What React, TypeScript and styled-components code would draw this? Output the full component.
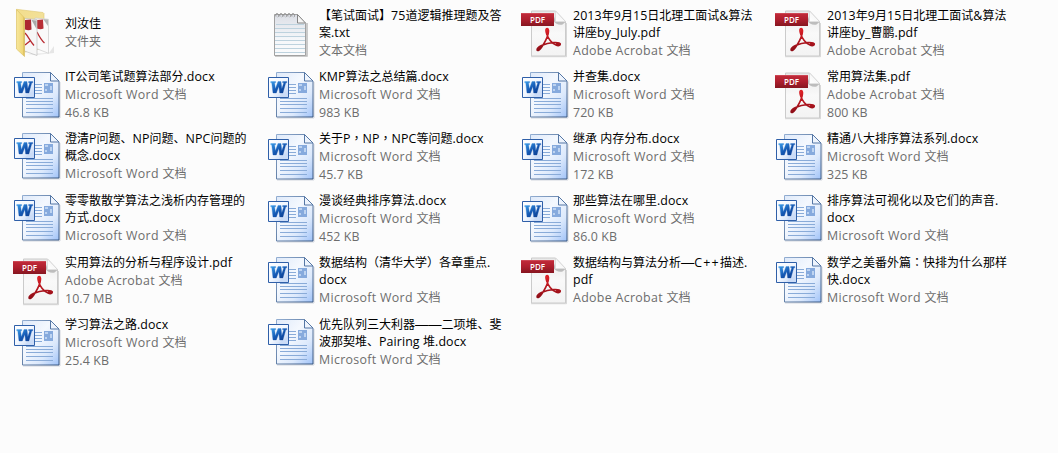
import React from "react";
import styled, { createGlobalStyle } from "styled-components";

const GlobalStyle = createGlobalStyle`
  body {
    margin: 0;
    background: #fcfcfc;
    overflow: hidden;
  }
`;

const FileGrid = styled.main`
  display: grid;
  grid-template-columns: repeat(4, 254px);
  grid-template-rows: 61px repeat(5, 62px);
  padding: 3px 0 0 13px;
  box-sizing: border-box;
  width: 1058px;
  height: 453px;
  overflow: hidden;
  background: #fcfcfc;
  font-family: "Noto Sans CJK SC", sans-serif;
  font-size: 12px;
  color: #000;
`;

const FileTile = styled.article`
  display: flex;
  align-items: flex-start;
  gap: 4px;
`;

const IconSlot = styled.div<{ $raised: boolean }>`
  flex: none;
  width: 48px;
  height: 58px;
  margin-top: ${(p) => (p.$raised ? "-1px" : "0")};
  svg {
    display: block;
  }
`;

const Details = styled.div<{ $short: boolean }>`
  padding-top: ${(p) => (p.$short ? "11px" : "3px")};
  white-space: pre;
`;

const NameLine = styled.div`
  height: 17px;
  line-height: 17px;
`;

const MetaLine = styled.div`
  height: 18px;
  line-height: 19px;
  color: #6d6d6d;
`;

const Latin = styled.span<{ $spacing: number }>`
  font-family: "Open Sans", "Noto Sans", sans-serif;
  font-size: 12.4px;
  letter-spacing: ${(p) => p.$spacing}px;
`;

const CenteredMark = styled.span`
  font-family: "Noto Sans CJK TC", sans-serif;
`;

const Dash = styled.span`
  font-family: "Liberation Sans", sans-serif;
  font-size: 13.3px;
`;

const MixedText = ({ text, spacing = 0.1 }: { text: string; spacing?: number }) => (
  <>
    {text.split(/([\x20-\x7e]+|—+|[，：（）])/).map((run, i) => {
      if (i % 2 === 0) return run;
      if (run.startsWith("—")) return <Dash key={i}>{run}</Dash>;
      if (/[，：（）]/.test(run)) return <CenteredMark key={i} lang="zh-TW">{run}</CenteredMark>;
      return (
        <Latin key={i} $spacing={run.includes("+") ? 1.2 : spacing}>
          {run}
        </Latin>
      );
    })}
  </>
);

const WordIcon = () => (
  <svg width="48" height="58" viewBox="0 0 48 58">
    <defs>
      <linearGradient id="wPage" x1="0" y1="0" x2="1" y2="1">
        <stop offset="0" stopColor="#dfeafa" />
        <stop offset=".4" stopColor="#f4f8fe" />
        <stop offset=".7" stopColor="#dce9fc" />
        <stop offset="1" stopColor="#9fc2f8" />
      </linearGradient>
      <linearGradient id="wEdge" x1="0" y1="0" x2="1" y2="1">
        <stop offset="0" stopColor="#93aed2" />
        <stop offset="1" stopColor="#35547f" />
      </linearGradient>
      <linearGradient id="wBadge" x1="0" y1="0" x2="1" y2="1">
        <stop offset="0" stopColor="#fff" />
        <stop offset=".5" stopColor="#f2f7ff" />
        <stop offset="1" stopColor="#b5cdf3" />
      </linearGradient>
      <linearGradient id="wLetter" x1="0" y1="0" x2="1" y2="1">
        <stop offset="0" stopColor="#3a9ce8" />
        <stop offset=".5" stopColor="#1559b4" />
        <stop offset="1" stopColor="#0b3a8c" />
      </linearGradient>
    </defs>
    <path d="M10 54h37V18" fill="none" stroke="#b9c0cb" strokeOpacity=".6" />
    <path d="M9.500 8.500h28l8.500 8.500v36H9.500z" fill="url(#wPage)" stroke="url(#wEdge)" />
    <path d="M37.500 8.500v8.500H46z" fill="#eef4fd" stroke="#5577a5" />
    <path d="M22 20.500h7M22 23.500h7M22 26.500h7M22 29.500h7M13 34.500h27M13 37.500h27M13 40.500h27M13 44.500h27M13 48.500h27" stroke="#89abd8" />
    <path d="M31 19h9v10h-9z" fill="#86aadd" />
    <path d="M32 20h3v2h-3zM37 22h2v4h-2zM32 25h2v2h-2z" fill="#bed4f1" />
    <path d="M1.500 13.500h20v20h-20z" fill="url(#wBadge)" stroke="#2f5fa8" />
    <path d="M12 33c1-3 5-5 9-6v6z" fill="#cbdcf7" />
    <path d="M3.700 17.500h5v1.300H7.600l.8 6L11 17.500h3l.8 7.200 2-5.900h-1.200v-1.300h4.200v1.300h-1L15.900 29h-3.200l-.9-6.600L9.300 29H6L4.700 18.800h-1z" fill="url(#wLetter)" stroke="url(#wLetter)" strokeWidth=".3" />
  </svg>
);

const PdfIcon = () => (
  <svg width="48" height="58" viewBox="0 0 48 58">
    <defs>
      <linearGradient id="pPage" x1="0" y1="0" x2="0" y2="1">
        <stop offset="0" stopColor="#e9e9e9" />
        <stop offset=".5" stopColor="#f9f9f9" />
        <stop offset="1" stopColor="#f3f3f3" />
      </linearGradient>
      <linearGradient id="pBanner" x1="0" y1="0" x2="0" y2="1">
        <stop offset="0" stopColor="#c32c3b" />
        <stop offset=".5" stopColor="#ae1f2e" />
        <stop offset="1" stopColor="#861620" />
      </linearGradient>
      <linearGradient id="pFold" x1="0" y1="1" x2="1" y2="0">
        <stop offset="0" stopColor="#fff" />
        <stop offset=".6" stopColor="#f6f6f6" />
        <stop offset="1" stopColor="#cfcfcf" />
      </linearGradient>
      <linearGradient id="pMark" x1="0" y1="0" x2="0" y2="1">
        <stop offset="0" stopColor="#dd1f26" />
        <stop offset="1" stopColor="#8f0d17" />
      </linearGradient>
    </defs>
    <path d="M10 54.700h35.500V21" fill="none" stroke="#c9c9c9" strokeOpacity=".7" />
    <path d="M10.500 9h24L44.500 19.500v34.500h-34z" fill="url(#pPage)" stroke="#cbcbcb" />
    <path d="M34.500 13v7h10l-3 2.500c-4 .8-8-1-9-4z" fill="#9a9a9a" opacity=".6" />
    <path d="M34.500 9v10.500h10z" fill="url(#pFold)" stroke="#d2d2d2" strokeWidth=".6" />
    <path d="M0 11h33v13H0z" fill="url(#pBanner)" />
    <path d="M0 11.500h33" stroke="#d45a65" strokeOpacity=".6" />
    <text x="9" y="21" fill="#fff" fontFamily="Open Sans, sans-serif" fontSize="9" fontWeight="600" textLength="15" lengthAdjust="spacingAndGlyphs">PDF</text>
    <g fill="none" stroke="url(#pMark)" strokeLinecap="round" strokeLinejoin="round">
      <path d="M26.300 26.600c-1.900-.1-1.500 2.800-.6 5.400 1.600 4.700 5.300 9.300 9.300 11.100 2.300 1 4.600.3 4.300-1.100-.4-1.500-3.500-1.700-6.500-1.500-4.200.3-8.500 1.300-12.300 3-2.500 1.200-4.700 3-4.400 4.500.4 1.300 2.500.1 4.300-2.500 2.900-4.200 5.700-9.500 6.700-13.500.6-2.600.7-5.300-.8-5.400z" strokeWidth="1.600" />
      <path d="M26.200 27v5M17 47.800l3-3M35.500 42h3" strokeWidth="2" />
    </g>
  </svg>
);

const TextIcon = () => (
  <svg width="48" height="58" viewBox="0 0 48 58">
    <defs>
      <linearGradient id="tPage" x1="0" y1="0" x2="0" y2="1">
        <stop offset="0" stopColor="#dcdfe6" />
        <stop offset=".6" stopColor="#f5f7fa" />
        <stop offset="1" stopColor="#fafbfc" />
      </linearGradient>
    </defs>
    <path d="M8 54h32V21" fill="none" stroke="#bbb" strokeWidth="1.500" />
    <path d="M7.500 12.500h23l8 9v32h-31z" fill="url(#tPage)" stroke="#a1a1a1" />
    <path d="M9 22.500h28M8 26.500h30M8 30.500h30M8 34.500h30M8 38.500h30M8 42.500h30M8 46.500h30M8 50.500h30" stroke="#bdd2de" />
    <path d="M30.500 12.500v8.500h8z" fill="#f5f5f5" stroke="#858585" />
    {[10, 14, 18, 22, 26].map((x) => (
      <path key={x} d={`M${x - 1} 14.500c-.8-2 .2-3.500 1.500-3s1.500 3 .3 3.700`} fill="none" stroke="#8c8c8c" strokeWidth=".9" />
    ))}
  </svg>
);

const FolderIcon = () => (
  <svg width="48" height="58" viewBox="0 0 48 58">
    <defs>
      <linearGradient id="fBack" x1="0" y1="0" x2="1" y2="1">
        <stop offset="0" stopColor="#f2dd8c" />
        <stop offset="1" stopColor="#f3e3a2" />
      </linearGradient>
      <linearGradient id="fFront" x1="0" y1="0" x2="1" y2="0">
        <stop offset="0" stopColor="#f8e79b" />
        <stop offset=".75" stopColor="#f0d87a" />
        <stop offset="1" stopColor="#d4b24e" />
      </linearGradient>
    </defs>
    <path d="M14 51l22-1 5-7v7l-18 2z" fill="#999" opacity=".22" />
    <path d="M3.500 6.300L30 9.500l1 1V45L12 49z" fill="url(#fBack)" stroke="#dfc873" strokeWidth=".6" />
    <path d="M22 15l13.500 1.300v34L22 45z" fill="#fafafa" stroke="#ccc" strokeWidth=".7" />
    <path d="M24 17l6-.5.500 9c-2 1-4 1-6.500 0z" fill="#b82e36" />
    <path d="M24 29c2 4 4 8 7.500 11" fill="none" stroke="#b8292f" strokeWidth="1.300" />
    <path d="M30 16l5 .5V23z" fill="#b9b9b9" />
    <path d="M11.500 15.500l12.500 1v36L11.500 48z" fill="#f7f7f7" stroke="#bdbdbd" strokeWidth=".7" />
    <path d="M12 17l6-.5.500 10c-2 1-4 1-6.500 0z" fill="#ad2831" />
    <path d="M18.500 17l5 .5V26z" fill="#a9a9a9" />
    <path d="M12 30c3 3 5 8 9 12.500M12 42l5-4" fill="none" stroke="#b8292f" strokeWidth="1.300" />
    <path d="M3.500 6.500L11.500 15v38.500L3.500 46z" fill="url(#fFront)" stroke="#ddc367" strokeWidth=".7" />
  </svg>
);

type Kind = "folder" | "text" | "pdf" | "word";

const icons: Record<Kind, () => React.JSX.Element> = {
  folder: FolderIcon,
  text: TextIcon,
  pdf: PdfIcon,
  word: WordIcon,
};

const labels: Record<Kind, string> = {
  folder: "文件夹",
  text: "文本文档",
  pdf: "Adobe Acrobat 文档",
  word: "Microsoft Word 文档",
};

interface FileEntry {
  kind: Kind;
  name: string[];
  size?: string;
}

const files: FileEntry[] = [
  { kind: "folder", name: ["刘汝佳"] },
  { kind: "text", name: ["【笔试面试】75道逻辑推理题及答", "案.txt"] },
  { kind: "pdf", name: ["2013年9月15日北理工面试&算法", "讲座by_July.pdf"] },
  { kind: "pdf", name: ["2013年9月15日北理工面试&算法", "讲座by_曹鹏.pdf"] },
  { kind: "word", name: ["IT公司笔试题算法部分.docx"], size: "46.8 KB" },
  { kind: "word", name: ["KMP算法之总结篇.docx"], size: "983 KB" },
  { kind: "word", name: ["并查集.docx"], size: "720 KB" },
  { kind: "pdf", name: ["常用算法集.pdf"], size: "800 KB" },
  { kind: "word", name: ["澄清P问题、NP问题、NPC问题的", "概念.docx"] },
  { kind: "word", name: ["关于P，NP，NPC等问题.docx"], size: "45.7 KB" },
  { kind: "word", name: ["继承 内存分布.docx"], size: "172 KB" },
  { kind: "word", name: ["精通八大排序算法系列.docx"], size: "325 KB" },
  { kind: "word", name: ["零零散散学算法之浅析内存管理的", "方式.docx"] },
  { kind: "word", name: ["漫谈经典排序算法.docx"], size: "452 KB" },
  { kind: "word", name: ["那些算法在哪里.docx"], size: "86.0 KB" },
  { kind: "word", name: ["排序算法可视化以及它们的声音.", "docx"] },
  { kind: "pdf", name: ["实用算法的分析与程序设计.pdf"], size: "10.7 MB" },
  { kind: "word", name: ["数据结构（清华大学）各章重点.", "docx"] },
  { kind: "pdf", name: ["数据结构与算法分析—C++描述.", "pdf"] },
  { kind: "word", name: ["数学之美番外篇：快排为什么那样", "快.docx"] },
  { kind: "word", name: ["学习算法之路.docx"], size: "25.4 KB" },
  { kind: "word", name: ["优先队列三大利器——二项堆、斐", "波那契堆、Pairing 堆.docx"] },
];

export default function App() {
  return (
    <>
      <GlobalStyle />
      <FileGrid>
        {files.map((file) => {
          const Icon = icons[file.kind];
          return (
            <FileTile key={file.name.join("")}>
              <IconSlot $raised={file.name.length > 1}>
                <Icon />
              </IconSlot>
              <Details $short={file.kind === "folder"}>
                {file.name.map((line) => (
                  <NameLine key={line}>
                    <MixedText text={line} />
                  </NameLine>
                ))}
                <MetaLine>
                  <MixedText text={labels[file.kind]} spacing={0.32} />
                </MetaLine>
                {file.size && (
                  <MetaLine>
                    <MixedText text={file.size} />
                  </MetaLine>
                )}
              </Details>
            </FileTile>
          );
        })}
      </FileGrid>
    </>
  );
}
